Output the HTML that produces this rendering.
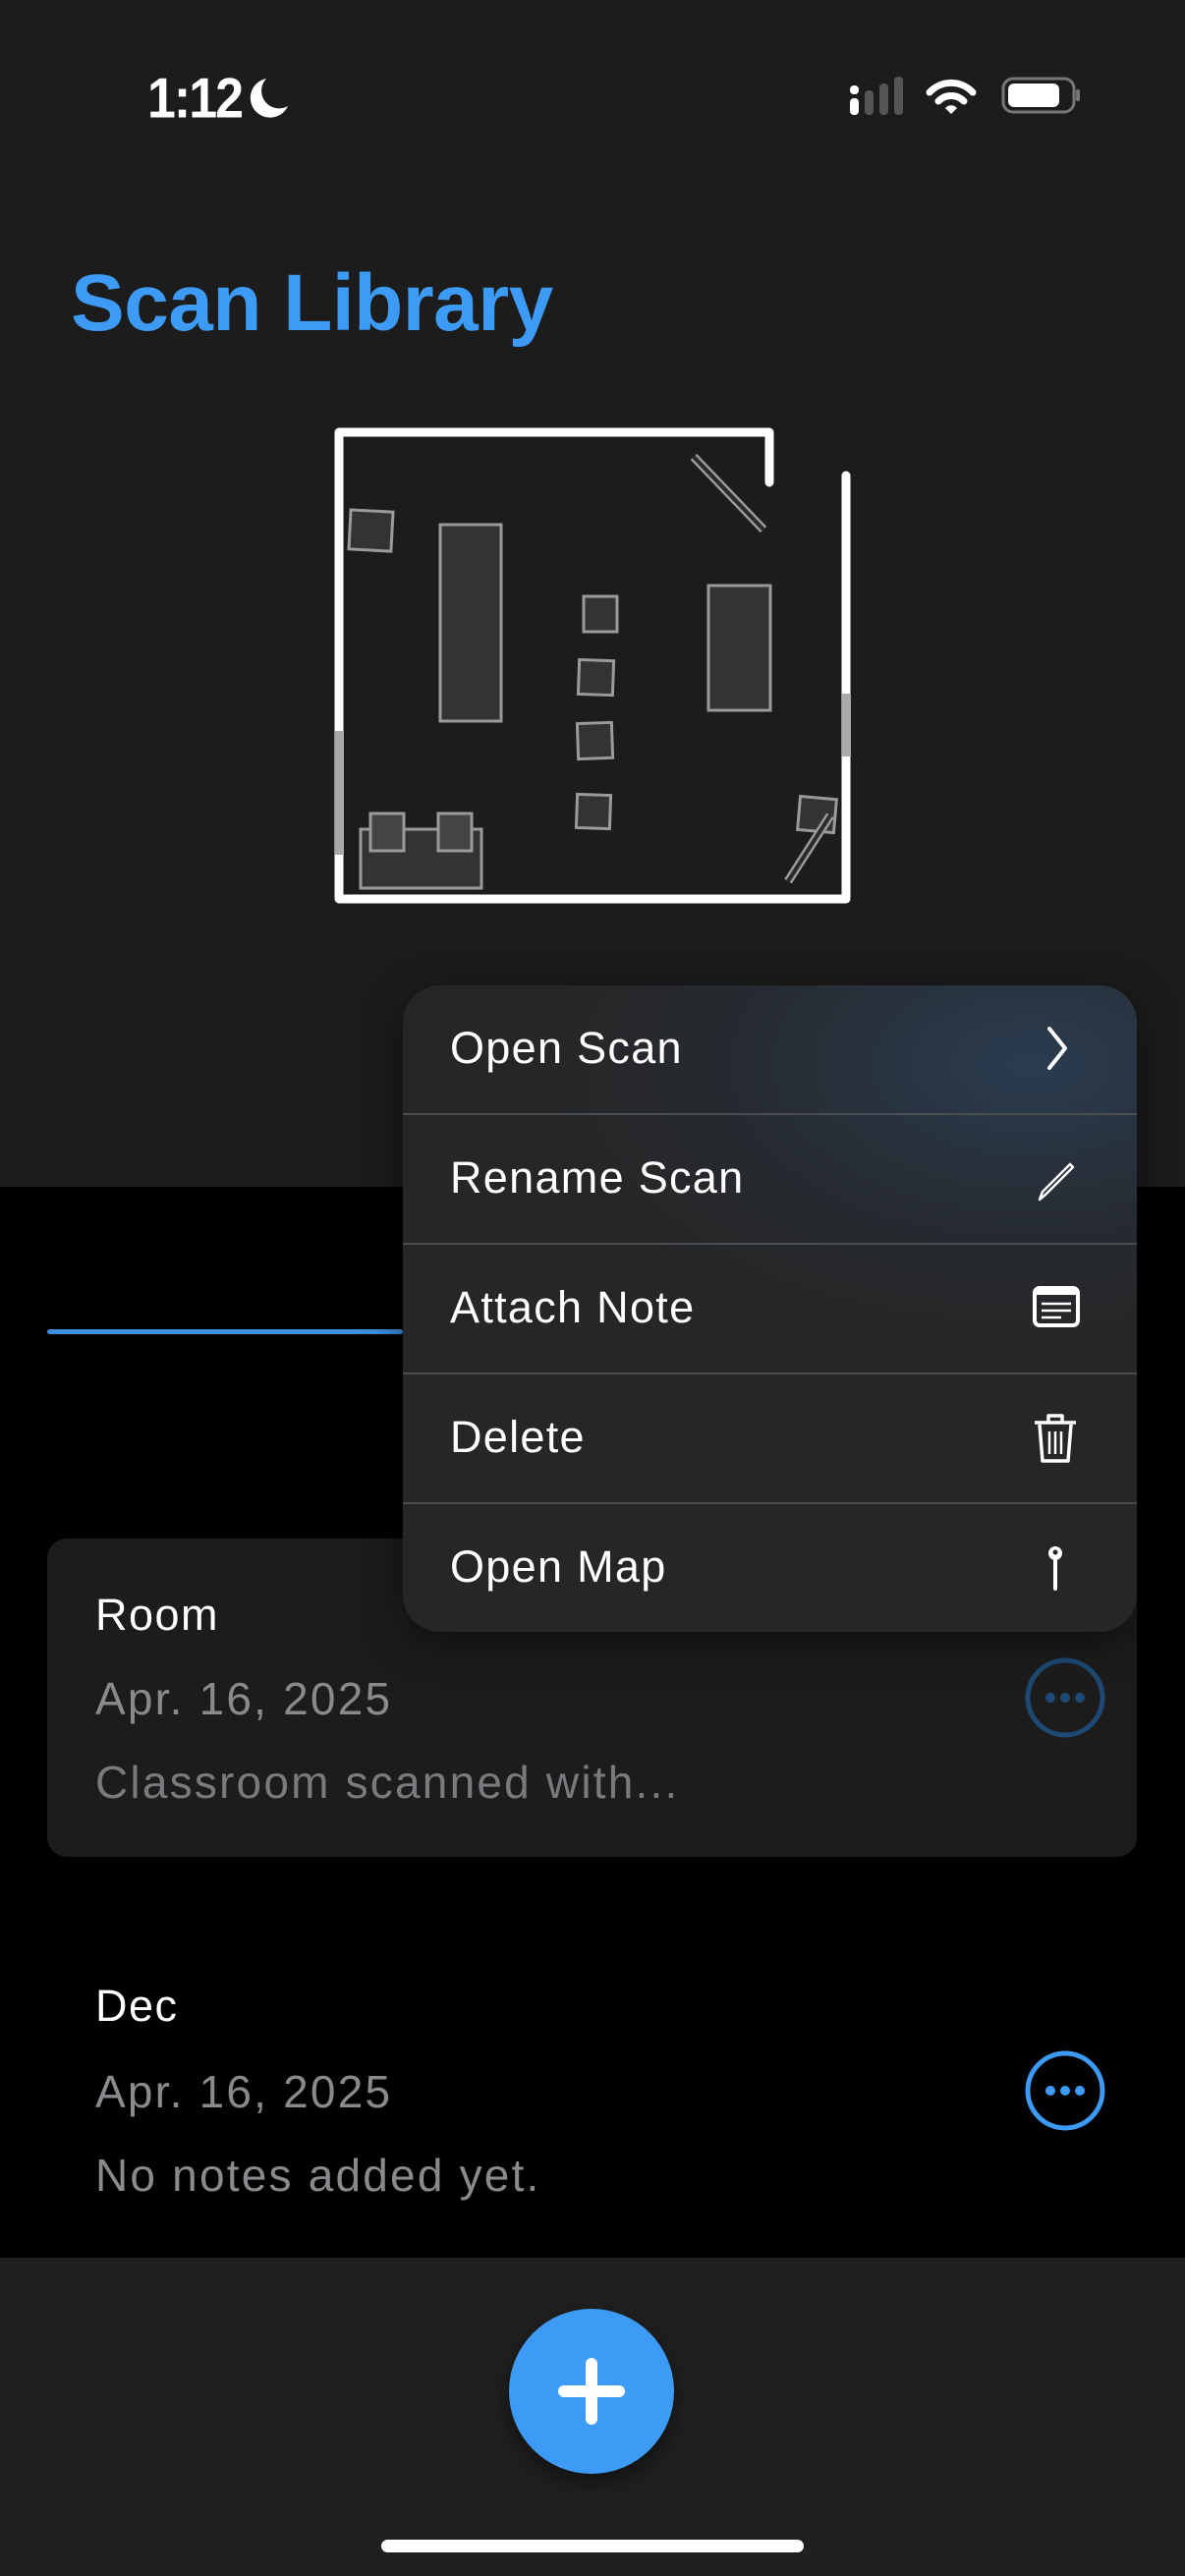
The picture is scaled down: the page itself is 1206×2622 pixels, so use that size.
<!DOCTYPE html>
<html><head><meta charset="utf-8"><style>
*{margin:0;padding:0;box-sizing:border-box}
body{width:1206px;height:2622px;background:#000;font-family:"Liberation Sans",sans-serif;position:relative;overflow:hidden;color:#fff}
.abs{position:absolute}
.top{left:0;top:0;width:1206px;height:1208px;background:#1c1c1c}
.title{left:72px;top:262px;font-size:82px;font-weight:bold;color:#3d9bf5;letter-spacing:-0.5px}
.time{left:150px;top:68px;font-size:52px;font-weight:bold;letter-spacing:-2px;transform:scaleY(1.1);transform-origin:top left}
.menu{left:410px;top:1003px;width:747px;height:658px;border-radius:38px;background:radial-gradient(ellipse 520px 300px at 640px 80px,#2b3c50 0%,#262a30 60%,#262626 100%);overflow:hidden;box-shadow:0 10px 40px rgba(0,0,0,.5)}
.row{position:absolute;left:0;width:747px;height:132px;border-bottom:2px solid #4a4d52}
.row span{position:absolute;left:48px;top:38px;font-size:45px;color:#fff;letter-spacing:1.3px}
.row svg{position:absolute;left:638px;top:36px}
.card{left:48px;top:1566px;width:1109px;height:324px;border-radius:20px;background:#1c1c1c}
.t1{font-size:45px;color:#fff;letter-spacing:1.5px}
.t2{font-size:46px;color:#8a8a8e;letter-spacing:2.2px}
</style></head><body>
<div class="abs top"></div>
<div class="abs time">1:12</div>
<svg class="abs" style="left:253px;top:78px" width="44" height="42" viewBox="0 0 44 42"><path d="M18 2 A20 20 0 1 0 40 30 A18 18 0 0 1 18 2Z" fill="#fff"/></svg>
<svg class="abs" style="left:862px;top:76px" width="240" height="44" viewBox="0 0 240 44">
<rect x="3" y="24" width="9" height="17" rx="4" fill="#fff"/><rect x="3" y="11" width="9" height="9" rx="4" fill="#fff"/>
<rect x="18" y="16" width="9" height="25" rx="4" fill="#555"/><rect x="33" y="9" width="9" height="32" rx="4" fill="#555"/><rect x="48" y="2" width="9" height="39" rx="4" fill="#555"/>
<path d="M84 18 A30 30 0 0 1 128 18" stroke="#fff" stroke-width="7" fill="none" stroke-linecap="round"/>
<path d="M93 27 A18 18 0 0 1 119 27" stroke="#fff" stroke-width="7" fill="none" stroke-linecap="round"/>
<path d="M100 34 L106 40 L112 34 A8 8 0 0 0 100 34Z" fill="#fff"/>
<rect x="159" y="4" width="72" height="34" rx="10" fill="none" stroke="#777" stroke-width="3"/>
<rect x="164" y="9" width="52" height="24" rx="6" fill="#fff"/>
<rect x="233" y="15" width="4" height="12" rx="2" fill="#777"/>
</svg>
<div class="abs title">Scan Library</div>

<svg class="abs" style="left:0;top:0" width="1206" height="1000" viewBox="0 0 1206 1000">
<g fill="#333" stroke="#9a9a9a" stroke-width="3">
<rect x="356" y="520" width="43" height="40" transform="rotate(3 377 540)"/>
<rect x="448" y="534" width="62" height="200"/>
<rect x="594" y="607" width="34" height="36"/>
<rect x="589" y="672" width="35" height="35" transform="rotate(2 606 690)"/>
<rect x="588" y="736" width="35" height="36" transform="rotate(-2 605 754)"/>
<rect x="587" y="809" width="34" height="34" transform="rotate(2 604 826)"/>
<rect x="721" y="596" width="63" height="127"/>
<rect x="367" y="844" width="123" height="60"/>
<rect x="377" y="828" width="34" height="38" fill="#444"/>
<rect x="446" y="828" width="34" height="38" fill="#444"/>
<rect x="813" y="812" width="37" height="34" transform="rotate(5 831 829)"/>
<line x1="706" y1="465" x2="777" y2="539" stroke-width="9" stroke="#9a9a9a"/>
<line x1="706" y1="465" x2="777" y2="539" stroke-width="4" stroke="#2a2a2a"/>
<line x1="845" y1="830" x2="802" y2="897" stroke-width="9" stroke="#9a9a9a"/>
<line x1="845" y1="830" x2="802" y2="897" stroke-width="4" stroke="#2a2a2a"/>
</g>
<g stroke-width="9" fill="none" stroke-linecap="round" stroke-linejoin="round">
<path d="M783 491 V440 H345 V915 H861 V484" stroke="#fff"/>
</g>
<rect x="341" y="744" width="9" height="126" fill="#a8a8a8"/>
<rect x="857" y="706" width="9" height="64" fill="#a8a8a8"/>
</svg>

<div class="abs" style="left:48px;top:1353px;width:362px;height:5px;background:#3d8fe0;border-radius:3px"></div>

<div class="abs card"></div>
<div class="abs t1" style="left:97px;top:1618px">Room</div>
<div class="abs t2" style="left:97px;top:1702px">Apr. 16, 2025</div>
<div class="abs t2" style="left:97px;top:1787px;color:#7a7a7e">Classroom scanned with...</div>
<svg class="abs" style="left:1040px;top:1684px" width="88" height="88" viewBox="0 0 88 88"><circle cx="44" cy="44" r="38" fill="none" stroke="#1d4a74" stroke-width="5"/><circle cx="29" cy="44" r="5" fill="#1d4a74"/><circle cx="44" cy="44" r="5" fill="#1d4a74"/><circle cx="59" cy="44" r="5" fill="#1d4a74"/></svg>

<div class="abs t1" style="left:97px;top:2016px">Dec</div>
<div class="abs t2" style="left:97px;top:2102px">Apr. 16, 2025</div>
<div class="abs t2" style="left:97px;top:2187px">No notes added yet.</div>
<svg class="abs" style="left:1040px;top:2084px" width="88" height="88" viewBox="0 0 88 88"><circle cx="44" cy="44" r="38" fill="none" stroke="#3d9bf5" stroke-width="5"/><circle cx="29" cy="44" r="5" fill="#3d9bf5"/><circle cx="44" cy="44" r="5" fill="#3d9bf5"/><circle cx="59" cy="44" r="5" fill="#3d9bf5"/></svg>

<div class="abs" style="left:0;top:2298px;width:1206px;height:324px;background:#202020"></div>
<div class="abs" style="left:518px;top:2350px;width:168px;height:168px;border-radius:50%;background:#3d9bf5;box-shadow:0 8px 24px rgba(0,0,0,.5)"></div>
<div class="abs" style="left:568px;top:2428px;width:68px;height:12px;border-radius:6px;background:#fff"></div>
<div class="abs" style="left:596px;top:2400px;width:12px;height:68px;border-radius:6px;background:#fff"></div>
<div class="abs" style="left:388px;top:2585px;width:430px;height:13px;border-radius:7px;background:#fff"></div>

<div class="abs menu">
<div class="row" style="top:0"><span>Open Scan</span><svg width="52" height="60" viewBox="0 0 52 60"><path d="M20 8 L36 28 L20 48" stroke="#fff" stroke-width="4" fill="none" stroke-linecap="round" stroke-linejoin="round"/></svg></div>
<div class="row" style="top:132px"><span>Rename Scan</span><svg width="52" height="60" viewBox="0 0 52 60"><path d="M10 50 L13 42 L41 14 L44 17 L16 45 Z" stroke="#fff" stroke-width="2.5" fill="none" stroke-linejoin="round"/></svg></div>
<div class="row" style="top:264px"><span>Attach Note</span><svg width="52" height="60" viewBox="0 0 52 60"><rect x="5" y="8" width="44" height="38" rx="5" fill="none" stroke="#fff" stroke-width="4"/><rect x="5" y="8" width="44" height="7" fill="#fff"/><path d="M12 24H42M12 31H42M12 38H32" stroke="#fff" stroke-width="2.5"/></svg></div>
<div class="row" style="top:396px"><span>Delete</span><svg width="52" height="60" viewBox="0 0 52 60"><path d="M5 13H47M19 13V6H33V13M10 15 L13 52 H39 L42 15" stroke="#fff" stroke-width="3.5" fill="none" stroke-linejoin="round"/><path d="M20 22V45M26 22V45M32 22V45" stroke="#fff" stroke-width="2.5"/></svg></div>
<div class="row" style="top:528px;border:none"><span>Open Map</span><svg width="52" height="60" viewBox="0 0 52 60"><circle cx="26" cy="14" r="7" fill="#fff"/><circle cx="26" cy="13" r="2.5" fill="#262626"/><path d="M26 20 V50" stroke="#fff" stroke-width="4" stroke-linecap="round"/></svg></div>
</div>
</body></html>
